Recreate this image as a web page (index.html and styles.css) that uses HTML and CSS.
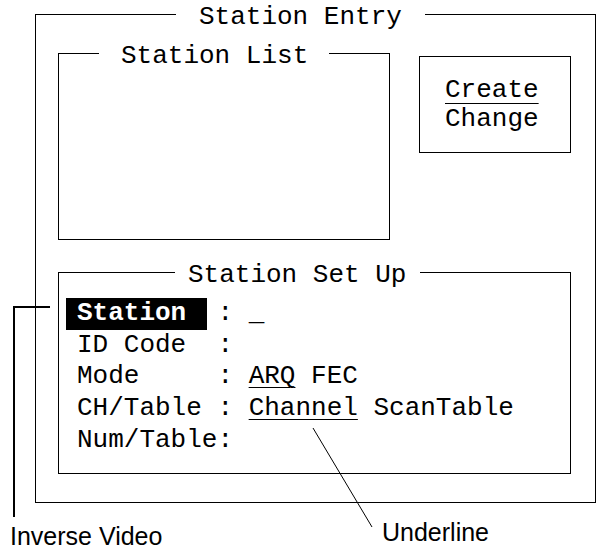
FILE: index.html
```html
<!DOCTYPE html>
<html lang="en">
<head>
  <meta charset="UTF-8" />
  <meta name="viewport" content="width=device-width, initial-scale=1.0"/>
  <title>Station Entry</title>
  <link rel="stylesheet" href="styles.css">
</head>
<body>
  <div class="page">
    <fieldset class="entry">
      <legend class="entry-title">Station Entry</legend>
      <div class="top-row">
        <fieldset class="list">
          <legend class="list-title">Station List</legend>
        </fieldset>
        <div class="menu">
          <div class="menu-item selected">Create</div>
          <div class="menu-item">Change</div>
        </div>
      </div>
      <fieldset class="setup">
        <legend class="setup-title">Station Set Up</legend>
        <div class="rows">
          <div class="row"><span class="inverse">Station</span>  : _</div>
          <div class="row">ID Code  :</div>
          <div class="row">Mode     : <span class="chosen">ARQ</span> FEC</div>
          <div class="row">CH/Table : <span class="chosen">Channel</span> ScanTable</div>
          <div class="row">Num/Table:</div>
        </div>
      </fieldset>
    </fieldset>

    <div class="notes">
      <span class="note note-inverse">Inverse Video</span>
      <span class="note note-underline">Underline</span>
    </div>

    <!-- leader lines from the notes to the screen -->
    <svg class="leaders" width="596" height="550" viewBox="0 0 596 550">
      <polyline points="50,307 14,307 14,517" fill="none" stroke="#000" stroke-width="2"/>
      <line x1="313" y1="428" x2="372" y2="527" stroke="#000" stroke-width="1"/>
    </svg>
  </div>
</body>
</html>
```

FILE: styles.css
```css
* { box-sizing: border-box; }
body {
  margin: 0;
  background: #ffffff;
  color: #000;
  font-family: 'Liberation Mono', 'Courier New', monospace;
  font-size: 26px;
}
.page {
  position: relative;
  width: 596px;
  height: 550px;
  overflow: hidden;
}
fieldset {
  margin: 0;
  padding: 0;
  border: 1px solid #000;
  min-inline-size: 0;
}
legend {
  padding: 5px 0 0 0;
  line-height: 20px;
  white-space: pre;
}
.entry {
  margin: 2px 0 0 35px;
  width: 561px;
  height: 501px;
}
.entry-title {
  margin-left: 140px;
  padding-left: 23px;
  padding-right: 23px;
}
.top-row {
  display: flex;
  align-items: flex-start;
  margin: 14px 0 0 22px;
}
.list {
  width: 332px;
  height: 199px;
}
.list-title {
  margin-left: 40px;
  padding-left: 22px;
  padding-right: 21px;
}
.menu {
  width: 152px;
  height: 97px;
  margin: 15px 0 0 29px;
  border: 1px solid #000;
  padding: 19px 0 0 25px;
}
.menu-item {
  line-height: 29px;
  white-space: pre;
}
.selected {
  text-decoration: underline;
  text-decoration-thickness: 1px;
  text-underline-offset: 6px;
}
.setup {
  margin: 20px 0 0 22px;
  width: 513px;
  height: 214px;
}
.setup-title {
  margin-left: 116px;
  padding-left: 13px;
  padding-right: 14px;
}
.rows {
  padding: 13px 0 0 18px;
}
.row {
  line-height: 31.7px;
  height: 31.7px;
  white-space: pre;
}
.inverse {
  display: inline-block;
  background: #000;
  color: #fff;
  font-weight: bold;
  padding: 0 21px 0 11px;
  margin: 0 -21px 0 -11px;
}
.chosen {
  text-decoration: underline;
  text-decoration-thickness: 1px;
  text-underline-offset: 4px;
}
.notes {
  display: flex;
  align-items: flex-start;
  padding-left: 10px;
  font-family: 'Liberation Sans', Arial, sans-serif;
  font-size: 25px;
  line-height: 26px;
}
.note-inverse {
  width: 372px;
  margin-top: 20px;
}
.note-underline {
  margin-top: 16px;
}
.leaders {
  position: absolute;
  left: 0;
  top: 0;
  pointer-events: none;
}
```
